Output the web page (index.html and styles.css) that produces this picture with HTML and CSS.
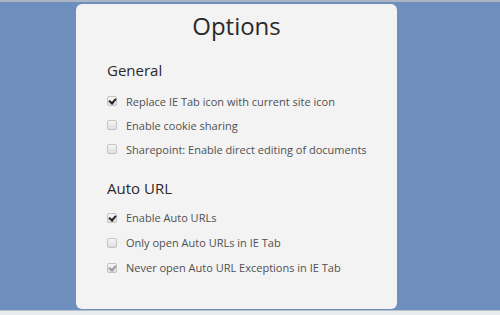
FILE: index.html
```html
<!DOCTYPE html>
<html lang="en">
<head>
  <meta charset="UTF-8" />
  <title>Options</title>
  <link rel="stylesheet" href="styles.css">
</head>
<body>
  <div class="topline"></div>
  <div class="stage">
    <div class="card">
      <h1>Options</h1>

      <h2>General</h2>
      <label class="row"><span class="box checked"></span>Replace IE Tab icon with current site icon</label>
      <label class="row"><span class="box"></span>Enable cookie sharing</label>
      <label class="row"><span class="box"></span>Sharepoint: Enable direct editing of documents</label>

      <h2 class="second">Auto URL</h2>
      <div class="group">
        <label class="row"><span class="box checked"></span>Enable Auto URLs</label>
        <label class="row"><span class="box"></span>Only open Auto URLs in IE Tab</label>
        <label class="row"><span class="box checked disabled"></span>Never open Auto URL Exceptions in IE Tab</label>
      </div>
    </div>
  </div>
  <div class="bottomline"></div>
</body>
</html>
```

FILE: styles.css
```css
body {
  margin: 0;
  width: 500px;
  height: 315px;
  overflow: hidden;
  background: #6e8fbd;
  font-family: 'Open Sans', sans-serif;
  display: flex;
  flex-direction: column;
}

.topline {
  height: 2px;
  background: #aab4c2;
}

.stage {
  flex: 1;
  padding: 2px 0 1px 76px;
  display: flex;
}

.card {
  width: 321px;
  background: #f3f3f3;
  border-radius: 6px;
  padding: 0 0 0 31px;
  box-sizing: border-box;
}

.bottomline {
  height: 4px;
  background: #e9ebee;
  border-top: 1px solid #b9c0ca;
}

h1 {
  margin: 5px 0 0 -31px;
  text-align: center;
  font-weight: normal;
  font-size: 24px;
  line-height: 34px;
  color: #2a2a2a;
}

h2 {
  margin: 17px 0 9px;
  font-weight: normal;
  font-size: 15px;
  line-height: 20px;
  color: #2a2a2a;
}

h2.second {
  margin-top: 17px;
  margin-bottom: 7px;
}

.row {
  display: flex;
  align-items: center;
  height: 24px;
  font-size: 11px;
  color: #505050;
}

.group .row {
  height: 25px;
}

.box {
  width: 10px;
  height: 10px;
  border: 1px solid #c4c4c4;
  border-radius: 2px;
  background: linear-gradient(#f6f6f6, #dedede);
  margin-right: 9px;
  box-sizing: border-box;
  position: relative;
}

.box.checked::after {
  content: "";
  position: absolute;
  left: 2px;
  top: 0px;
  width: 3px;
  height: 5px;
  border: solid #222;
  border-width: 0 2px 2px 0;
  transform: rotate(40deg);
}

.box.disabled::after {
  border-color: #999;
}
```
